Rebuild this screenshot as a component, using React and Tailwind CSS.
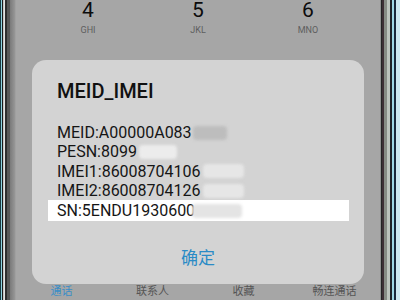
import React from 'react';

const keys = [
  { digit: '4', letters: 'GHI' },
  { digit: '5', letters: 'JKL' },
  { digit: '6', letters: 'MNO' },
];

const tabs = [
  { label: '通话', active: true },
  { label: '联系人' },
  { label: '收藏' },
  { label: '畅连通话' },
];

// blurred-out serial tails
function Smudge({ w, className }) {
  return (
    <span className={`inline-block align-middle h-[14px] rounded-sm blur-[1.5px] ${w} ${className}`} />
  );
}

export default function App() {
  return (
    <div
      className="w-[400px] h-[300px] flex overflow-hidden bg-[#a6a6a6]"
      style={{ fontFamily: 'Roboto, "Noto Sans CJK SC", sans-serif' }}
    >
      {/* left bezel */}
      <div className="flex h-full shrink-0">
        <div className="w-px bg-[#173840]" />
        <div className="w-px bg-[#8fd3e0]" />
        <div className="w-px bg-[#1a1a1a]" />
        <div className="w-px bg-[#c4c4c4]" />
        <div className="w-px bg-[#e2e2e2]" />
        <div className="w-[2px] bg-[#2e2e2e]" />
        <div className="w-[3px] bg-[#595959]" />
        <div className="w-[5px] bg-gradient-to-r from-[#7a7a7a] to-[#979797]" />
        <div className="w-px bg-[#a0a0a0]" />
      </div>

      {/* screen */}
      <div className="flex-1 flex flex-col h-full">
        <div className="grid grid-cols-3 mx-[17px]">
          {keys.map(k => (
            <div key={k.digit} className="flex flex-col items-center">
              <span className="text-[21px] leading-[21px] text-[#0c0c0c]">{k.digit}</span>
              <span className="mt-[3px] text-[9px] leading-[12px] text-[#5e5e5e]">{k.letters}</span>
            </div>
          ))}
        </div>

        {/* dialog */}
        <div className="mt-[24px] mx-4 h-[224px] rounded-[14px] bg-[#d3d3d3] flex flex-col pt-[19px]">
          <div className="pl-[25px] text-[20px] leading-[24px] font-medium text-[#111]">MEID_IMEI</div>
          <div className="mt-[20px] ml-[16px] mr-[15px] text-[16px] leading-[19.3px] text-[#151515]">
            <div className="pl-[9px] flex items-center">
              <span>MEID:A00000A083</span>
              <Smudge w="w-[34px]" className="bg-[#bdbdbd] ml-px" />
            </div>
            <div className="pl-[9px] flex items-center">
              <span>PESN:8099</span>
              <Smudge w="w-[38px]" className="bg-[#ececec] ml-[2px]" />
            </div>
            <div className="pl-[9px] flex items-center">
              <span>IMEI1:86008704106</span>
              <Smudge w="w-[41px]" className="bg-[#e6e6e6] ml-[2px]" />
            </div>
            <div className="pl-[9px] flex items-center">
              <span>IMEI2:86008704126</span>
              <Smudge w="w-[41px]" className="bg-[#e6e6e6] ml-[2px]" />
            </div>
            <div className="pl-[9px] h-[21px] bg-white flex items-center">
              <span>SN:5ENDU1930600</span>
              <Smudge w="w-[50px]" className="bg-[#e4e4e4] -ml-[3px]" />
            </div>
          </div>
          <div className="mt-[25px] text-center text-[17px] leading-[24px] text-[#2a8bc6]">确定</div>
        </div>

        {/* bottom tabs */}
        <div className="grid grid-cols-4 h-[16px] items-center">
          {tabs.map(t => (
            <span
              key={t.label}
              className={`text-center text-[11px] leading-[12px] ${t.active ? 'text-[#3a8ec6]' : 'text-[#555]'}`}
            >
              {t.label}
            </span>
          ))}
        </div>
      </div>

      {/* right bezel */}
      <div className="flex h-full shrink-0">
        <div className="w-px bg-[#8e8e8e]" />
        <div className="w-px bg-[#242424]" />
        <div className="w-[2px] bg-[#3d2f35]" />
        <div className="w-[3px] bg-[#868b84]" />
        <div className="w-[3px] bg-[#bcc3bc]" />
        <div className="w-[2px] bg-[#202428]" />
        <div className="w-[2px] bg-[#9fd8e6]" />
        <div className="w-[2px] bg-[#18283a]" />
        <div className="w-[4px] bg-[#cde9f1]" />
      </div>
    </div>
  );
}
